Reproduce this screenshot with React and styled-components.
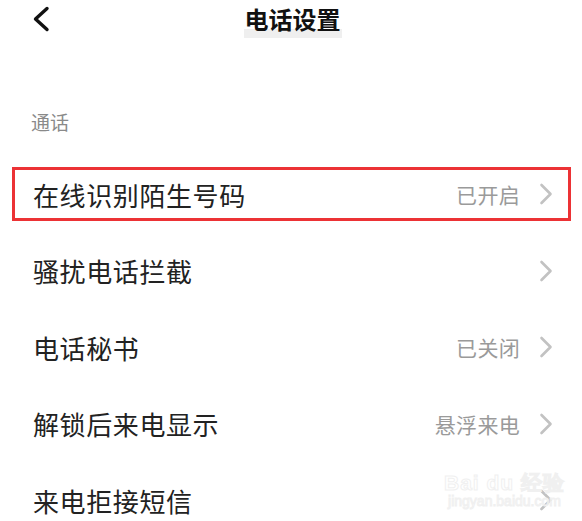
import React from "react";
import styled, { createGlobalStyle } from "styled-components";

const Global = createGlobalStyle`
  html, body { margin: 0; padding: 0; background: #ffffff; }
  body { font-family: "Noto Sans CJK SC", "Noto Sans", sans-serif; }
`;

const Page = styled.div`
  position: relative;
  width: 582px;
  height: 521px;
  overflow: hidden;
  background: #fff;
`;

const Header = styled.header`
  position: relative;
  height: 38px;
  display: flex;
  align-items: center;
  justify-content: center;
`;

const BackButton = styled.button`
  position: absolute;
  left: 31px;
  top: 4px;
  width: 20px;
  height: 30px;
  padding: 0;
  border: 0;
  background: none;
  display: flex;
  align-items: center;
  justify-content: center;
`;

const Title = styled.h1`
  position: relative;
  z-index: 0;
  margin: 0;
  margin-left: 3px;
  font-size: 24px;
  line-height: 38px;
  font-weight: 700;
  color: #111;
  &::after {
    content: "";
    position: absolute;
    left: -1px;
    right: -1px;
    bottom: 0;
    height: 9px;
    background: #efefef;
    z-index: -1;
  }
`;

const SectionLabel = styled.div`
  margin-top: 72px;
  padding-left: 31px;
  font-size: 19px;
  line-height: 24px;
  color: #8a8a8a;
`;

const List = styled.ul`
  list-style: none;
  margin: 22px 0 0;
  padding: 0;
`;

const Row = styled.li`
  position: relative;
  height: 76.5px;
  display: flex;
  align-items: center;
  padding: 0 29px 0 33px;
`;

const Label = styled.span`
  flex: 1;
  font-size: 26px;
  color: #222;
  letter-spacing: 0.6px;
`;

const Value = styled.span`
  font-size: 21px;
  color: #9a9a9a;
  letter-spacing: 0.3px;
  margin-right: 19px;
`;

const Highlight = styled.div`
  position: absolute;
  left: 12px;
  right: 11px;
  top: calc(50% - 27px);
  height: 54px;
  border: 3px solid #ec3235;
  box-sizing: border-box;
  pointer-events: none;
`;

const Watermark = styled.div`
  position: absolute;
  left: 444px;
  top: 472px;
  display: flex;
  flex-direction: column;
  align-items: center;
  font-family: "Liberation Sans", sans-serif;
  color: transparent;
  -webkit-text-stroke: 1px #f0f0f0;
  pointer-events: none;
`;

const WmTop = styled.div`
  font-size: 21px;
  font-weight: 700;
  line-height: 21px;
  letter-spacing: 1px;
`;

const WmBottom = styled.div`
  font-size: 14px;
  line-height: 17px;
`;

const Chevron = () => (
  <svg width="14" height="22" viewBox="0 0 14 22">
    <path d="M2.5 2 L11.5 11 L2.5 20" fill="none" stroke="#c2c2c2" strokeWidth="2.6" strokeLinecap="round" strokeLinejoin="round" />
  </svg>
);

const BackIcon = () => (
  <svg width="18" height="26" viewBox="0 0 18 26">
    <path d="M15 2.5 L3.5 13 L15 23.5" fill="none" stroke="#111" strokeWidth="3.4" strokeLinecap="round" strokeLinejoin="round" />
  </svg>
);

const rows = [
  { label: "在线识别陌生号码", value: "已开启", highlight: true },
  { label: "骚扰电话拦截", value: "" },
  { label: "电话秘书", value: "已关闭" },
  { label: "解锁后来电显示", value: "悬浮来电" },
  { label: "来电拒接短信", value: "" },
];

export default function App() {
  return (
    <Page>
      <Global />
      <Header>
        <BackButton aria-label="返回">
          <BackIcon />
        </BackButton>
        <Title>电话设置</Title>
      </Header>
      <SectionLabel>通话</SectionLabel>
      <List>
        {rows.map((r) => (
          <Row key={r.label}>
            <Label>{r.label}</Label>
            {r.value && <Value>{r.value}</Value>}
            <Chevron />
            {r.highlight && <Highlight />}
          </Row>
        ))}
      </List>
      <Watermark>
        <WmTop>Bai du 经验</WmTop>
        <WmBottom>jingyan.baidu.com</WmBottom>
      </Watermark>
    </Page>
  );
}
